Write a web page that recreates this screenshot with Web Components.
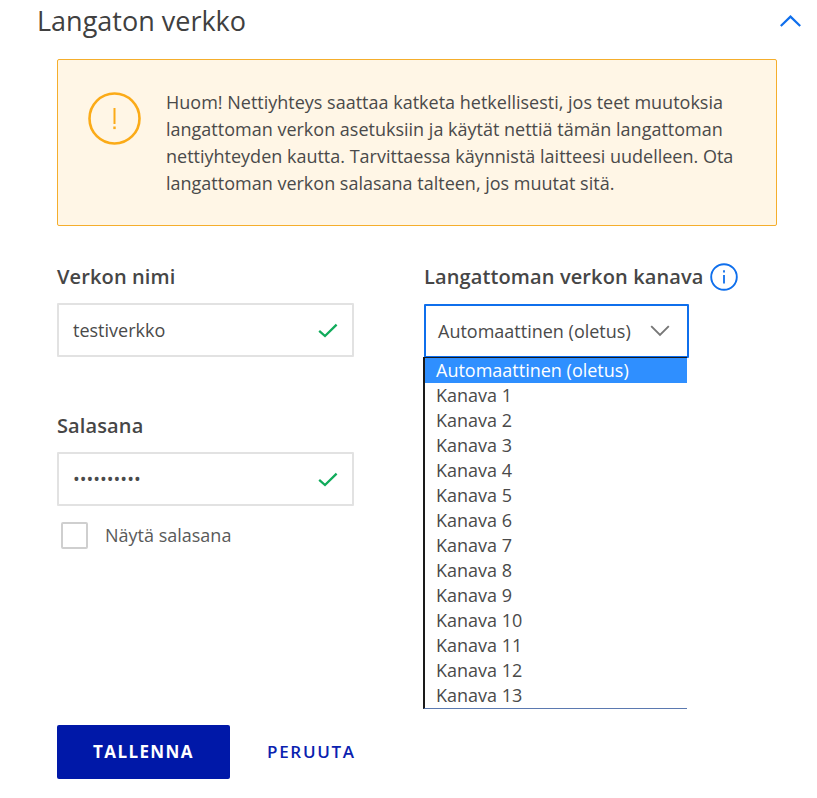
<!DOCTYPE html>
<html lang="fi">
<head>
<meta charset="utf-8">
<title>Langaton verkko</title>
<style>
  html, body { margin: 0; background: #fff; }
  body { font-family: "Open Sans", "Liberation Sans", sans-serif; color: #404040; }
</style>
</head>
<body>
<wifi-panel>
  <section-head slot="head">Langaton verkko</section-head>
  <alert-box slot="alert">Huom! Nettiyhteys saattaa katketa hetkellisesti, jos teet muutoksia langattoman verkon asetuksiin ja käytät nettiä tämän langattoman nettiyhteyden kautta. Tarvittaessa käynnistä laitteesi uudelleen. Ota langattoman verkon salasana talteen, jos muutat sitä.</alert-box>

  <form-field slot="left" label="Verkon nimi"><text-input>testiverkko</text-input></form-field>
  <form-field slot="left" label="Salasana" class="second">
    <text-input dots>••••••••••</text-input>
    <check-box>Näytä salasana</check-box>
  </form-field>

  <form-field slot="right" label="Langattoman verkon kanava" info><channel-select></channel-select></form-field>

  <action-button slot="actions" primary>TALLENNA</action-button>
  <action-button slot="actions">PERUUTA</action-button>
</wifi-panel>

<script>
class WifiPanel extends HTMLElement {
  connectedCallback() {
    this.attachShadow({ mode: 'open' });
    this.shadowRoot.innerHTML = `
      <style>
        :host { display: block; width: 817px; height: 798px; overflow: hidden; }
        .body { padding: 0 40px 0 57px; }
        .columns { display: grid; grid-template-columns: 297px 1fr; column-gap: 70px; margin-top: 37px; height: 462px; }
        .col { display: flex; flex-direction: column; }
        .actions { display: flex; align-items: center; gap: 37px; }
      </style>
      <slot name="head"></slot>
      <div class="body">
        <slot name="alert"></slot>
        <div class="columns">
          <div class="col"><slot name="left"></slot></div>
          <div class="col"><slot name="right"></slot></div>
        </div>
        <div class="actions"><slot name="actions"></slot></div>
      </div>
    `;
  }
}
customElements.define('wifi-panel', WifiPanel);

class SectionHead extends HTMLElement {
  connectedCallback() {
    this.attachShadow({ mode: 'open' });
    this.shadowRoot.innerHTML = `
      <style>
        :host { display: flex; justify-content: space-between; align-items: center; height: 42px; margin-bottom: 17px; padding: 0 16px 0 37px; }
        h2 { margin: 0; font: 400 27px/42px "Open Sans", sans-serif; color: #404040; }
        svg { display: block; }
      </style>
      <h2><slot></slot></h2>
      <svg width="21" height="14" viewBox="0 0 21 14" fill="none" stroke="#0f6fec" stroke-width="2.2"><path d="M.8 12 10.5 2.6 20.2 12"/></svg>
    `;
  }
}
customElements.define('section-head', SectionHead);

class AlertBox extends HTMLElement {
  connectedCallback() {
    this.attachShadow({ mode: 'open' });
    this.shadowRoot.innerHTML = `
      <style>
        :host { display: flex; box-sizing: border-box; width: 720px; height: 167px; padding: 29px 30px 0 30px; gap: 25px;
          background: #fff6e6; border: 1px solid #f5ae2c; border-radius: 2px; }
        svg { flex: none; display: block; margin-top: 3px; }
        p { margin: 0; font: 400 18px/27px "Open Sans", sans-serif; color: #4a4a4a; }
      </style>
      <svg width="53" height="53" viewBox="0 0 53 53" fill="none">
        <circle cx="26.5" cy="26.5" r="25" stroke="#fbab18" stroke-width="2.6"/>
        <path d="M26.5 16v16" stroke="#fbab18" stroke-width="2"/>
        <path d="M26.5 34.5v2.6" stroke="#fbab18" stroke-width="2.4"/>
      </svg>
      <p><slot></slot></p>
    `;
  }
}
customElements.define('alert-box', AlertBox);

class FormField extends HTMLElement {
  connectedCallback() {
    this.attachShadow({ mode: 'open' });
    const info = this.hasAttribute('info') ? `
      <svg width="28" height="28" viewBox="0 0 28 28" fill="none">
        <circle cx="14" cy="14" r="12.8" stroke="#0f6fec" stroke-width="1.9"/>
        <path d="M14 12v8.5" stroke="#0f6fec" stroke-width="1.8"/>
        <path d="M14 7.2v2.2" stroke="#0f6fec" stroke-width="1.8"/>
      </svg>` : '';
    this.shadowRoot.innerHTML = `
      <style>
        :host { display: block; position: relative; }
        :host(.second) { margin-top: 55px; }
        .label { display: flex; align-items: center; gap: 6px; height: 28px; margin: 0 0 12px; font: 600 20px/28px "Open Sans", sans-serif; letter-spacing: 0.12px; color: #464646; }
      </style>
      <div class="label"><span>${this.getAttribute('label')}</span>${info}</div>
      <slot></slot>
    `;
  }
}
customElements.define('form-field', FormField);

class TextInput extends HTMLElement {
  connectedCallback() {
    this.attachShadow({ mode: 'open' });
    this.shadowRoot.innerHTML = `
      <style>
        :host { display: flex; align-items: center; justify-content: space-between; box-sizing: border-box; width: 297px; height: 54px;
          padding: 0 14px; border: 2px solid #e2e2e2; border-radius: 1px; font: 400 18px/24px "Open Sans", sans-serif; color: #4a4a4a; }
        svg { display: block; flex: none; }
      </style>
      <span><slot></slot></span>
      <svg width="20" height="15" viewBox="0 0 20 15" fill="none" stroke="#10ab5b" stroke-width="2.3"><path d="M1.2 7.8 7 13 18.6 1.6"/></svg>
    `;
  }
}
customElements.define('text-input', TextInput);

class CheckBox extends HTMLElement {
  connectedCallback() {
    this.attachShadow({ mode: 'open' });
    this.shadowRoot.innerHTML = `
      <style>
        :host { display: flex; align-items: center; gap: 17px; margin: 16px 0 0 4px; font: 400 18px/27px "Open Sans", sans-serif; color: #5a5a5a; }
        .box { box-sizing: border-box; width: 27px; height: 27px; border: 2px solid #cfcfcf; border-radius: 2px; background: #fff; }
      </style>
      <span class="box"></span><slot></slot>
    `;
  }
}
customElements.define('check-box', CheckBox);

class ChannelSelect extends HTMLElement {
  connectedCallback() {
    this.attachShadow({ mode: 'open' });
    const options = ['Automaattinen (oletus)'];
    for (let i = 1; i <= 13; i++) options.push('Kanava ' + i);
    this.shadowRoot.innerHTML = `
      <style>
        /* margin collapses with the label's 12px */
        :host { display: block; position: relative; width: 265px; margin-top: 13px; }
        .control { display: flex; align-items: center; justify-content: space-between; box-sizing: border-box; height: 54px;
          padding: 0 17px 0 12px; border: 2px solid #0f6fec; border-radius: 1px; font: 400 18px/24px "Open Sans", sans-serif; color: #4a4a4a; }
        svg { display: block; flex: none; }
        ul { position: absolute; left: -1px; top: 53px; box-sizing: border-box; width: 264px; margin: 0; padding: 0; list-style: none; background: #fff;
          border-left: 2px solid #1a1a1a; border-top: 1px solid #1a1a1a; border-bottom: 1px solid #5b79b0; font: 400 18px/25px "Open Sans", sans-serif; color: #4a4a4a; }
        li { height: 25px; padding-left: 11px; white-space: nowrap; }
        li.on { background: #2f8fff; color: #fff; }
      </style>
      <div class="control">
        <span>Automaattinen (oletus)</span>
        <svg width="20" height="12" viewBox="0 0 20 12" fill="none" stroke="#777" stroke-width="1.9"><path d="M1.2 1.2 10 10 18.8 1.2"/></svg>
      </div>
      <ul>${options.map((o, i) => `<li class="${i === 0 ? 'on' : ''}">${o}</li>`).join('')}</ul>
    `;
  }
}
customElements.define('channel-select', ChannelSelect);

class ActionButton extends HTMLElement {
  connectedCallback() {
    this.attachShadow({ mode: 'open' });
    this.shadowRoot.innerHTML = `
      <style>
        :host { display: block; font: 600 17px/54px "Open Sans", sans-serif; letter-spacing: 1.7px; color: #0a22b0; }
        :host([primary]) { box-sizing: border-box; width: 173px; height: 54px; text-align: center; background: #0018a8; color: #fff; border-radius: 2px; font-weight: 700; letter-spacing: 1.4px; }
      </style>
      <slot></slot>
    `;
  }
}
customElements.define('action-button', ActionButton);
</script>
</body>
</html>
